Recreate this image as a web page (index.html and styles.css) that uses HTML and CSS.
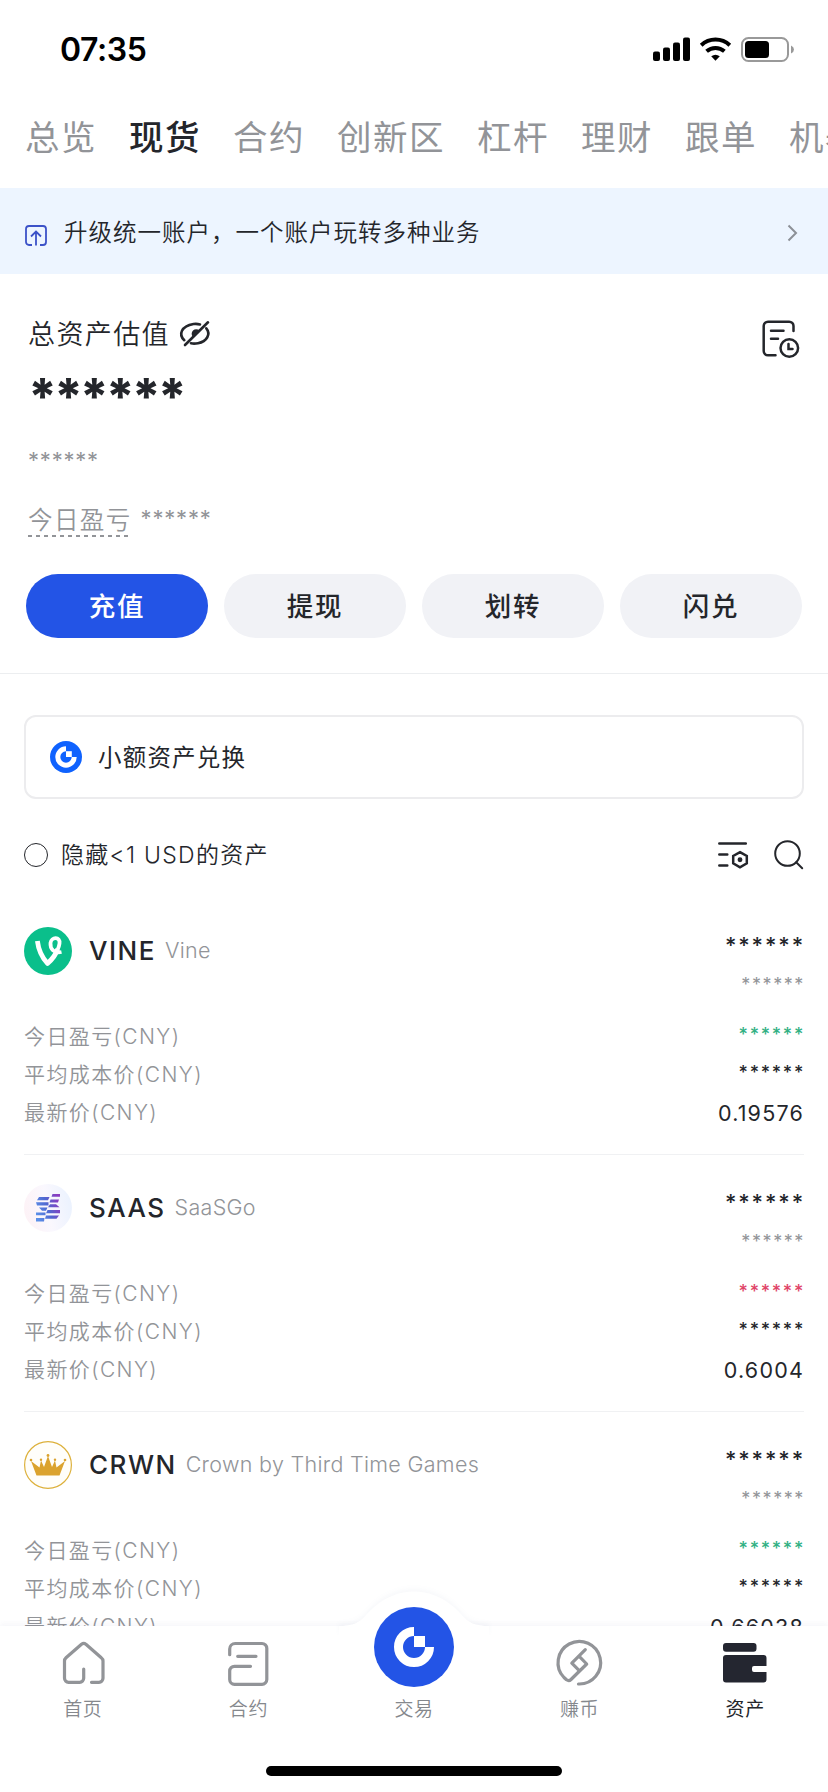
FILE: index.html
```html
<!DOCTYPE html>
<html lang="zh-CN">
<head>
<meta charset="utf-8">
<title>现货资产</title>
<link rel="stylesheet" href="styles.css">
</head>
<body>
<div class="phone">
  <main class="content">
    <header class="status">
      <span class="time">07:35</span>
      <svg class="status-icons" width="142" height="26" viewBox="0 0 142 26">
        <rect x="0" y="14.5" width="7" height="9.5" rx="2"/><rect x="10" y="10.5" width="7" height="13.5" rx="2"/><rect x="20" y="5.5" width="7" height="18.500" rx="2"/><rect x="30" y="0.500" width="7" height="23.500" rx="2"/>
        <g fill="none" stroke="#000" stroke-width="4"><path d="M48.200 8.200a21 21 0 0 1 28.600 0"/><path d="M53.600 14.300a13.500 13.500 0 0 1 17.800 0"/></g>
        <path d="M58.200 19.300q4.300-3.300 8.600 0L62.500 23.800z"/>
        <rect x="89" y="1" width="46" height="23" rx="6.500" fill="none" stroke="#999" stroke-width="2"/>
        <rect x="92" y="4" width="24" height="17" rx="3.500"/>
        <path d="M138 8.500q3 1.300 3 4t-3 4z" fill="#999"/>
      </svg>
    </header>
    <nav class="tabs">
      <span>总览</span><span class="tab-on">现货</span><span>合约</span><span>创新区</span><span>杠杆</span><span>理财</span><span>跟单</span><span>机器人</span>
    </nav>
    <section class="banner">
      <svg width="22" height="22" viewBox="0 0 22 22" class="banner-icon"><path d="M7 20H4a3 3 0 0 1-3-3V4a3 3 0 0 1 3-3h14a3 3 0 0 1 3 3v13a3 3 0 0 1-3 3h-3M11 20.500V7M6 11.500l5-5 5 5"/></svg>
      <span class="banner-text">升级统一账户，一个账户玩转多种业务</span>
      <svg width="11" height="18" viewBox="0 0 11 18" class="chevron"><path d="M1.500 1.500L9 9l-7.500 7.500"/></svg>
    </section>
    <section class="summary">
      <div class="summary-head">
        <span class="summary-title">总资产估值</span>
        <svg class="eye" width="31" height="26" viewBox="0 0 31 26"><path d="M4.300 19.200C-1.800 13.500 1.200 5 13.500 3q3.500-.400 6.500.400M26.300 7.300C31 13 27 20.500 18 22.200q-3.800.700-7 .100M28 1.300L5 24"/><path class="eye-fill" d="M19.500 9.500l-6.500 6.500a4.300 4.300 0 0 1 6.500-6.500z"/></svg>
        <svg class="bill" width="38" height="38" viewBox="0 0 38 38"><path d="M31.500 11V6a4.300 4.300 0 0 0-4.300-4.300H6A4.300 4.300 0 0 0 1.700 6v25A4.300 4.300 0 0 0 6 35.300h7.500M9 10.700h12.500M9 18.700h7M26.500 24v5h4"/><circle cx="27.300" cy="28" r="8.800"/></svg>
      </div>
      <div class="mask-total">******</div>
      <div class="mask-fiat">******</div>
      <div class="pnl"><span class="pnl-label">今日盈亏</span><span class="mask-pnl">******</span></div>
      <div class="actions">
        <button class="btn btn-main">充值</button><button class="btn">提现</button><button class="btn">划转</button><button class="btn">闪兑</button>
      </div>
    </section>
    <section class="dust">
      <svg width="32" height="32" viewBox="-16 -16 32 32"><circle r="16" fill="#0f62fe"/><path d="M0-8.200A8.200 8.200 0 1 0 8.200 0" fill="none" stroke="#fff" stroke-width="5"/><path d="M0-5.800H5.800V0H0z" fill="#fff"/></svg>
      <span class="dust-text">小额资产兑换</span>
    </section>
    <section class="filter">
      <i class="radio"></i>
      <span class="filter-text">隐藏&lt;1 USD的资产</span>
      <svg class="line-icon" width="31" height="28" viewBox="0 0 31 28"><path d="M1.300 2.500h26.500M1.300 13.500h8M1.300 24.500h8M22 11.200l6.800 3.800v7.400L22 26.300l-6.800-3.900V15z"/><circle cx="22" cy="18.700" r="1.200"/></svg>
      <svg class="line-icon search" width="30" height="30" viewBox="0 0 30 30"><circle cx="13.500" cy="13.500" r="12.300"/><path d="M22.200 22.200l6 6"/></svg>
    </section>
    <section class="assets">
      <article class="asset">
        <div class="asset-head">
          <svg width="48" height="48" viewBox="0 0 48 48"><circle cx="24" cy="24" r="24" fill="#0abf8b"/><path d="M13.400 14C14.500 23 18 30.500 23.500 36.500C29 31.500 32 27.500 33.500 22" fill="none" stroke="#fff" stroke-width="4.800" stroke-linejoin="round"/><path d="M37.500 25C30 26.500 26 22 26.500 16C27.300 9.500 36.500 9.500 35.500 16.500C35 20 34.500 21 33.500 23" fill="none" stroke="#fff" stroke-width="3.800"/></svg>
          <b class="symbol">VINE</b><span class="name">Vine</span>
          <div class="amounts"><span class="mask-amount">******</span><span class="mask-value">******</span></div>
        </div>
        <dl class="rows">
          <div class="row"><dt>今日盈亏(CNY)</dt><dd class="mask up">******</dd></div>
          <div class="row"><dt>平均成本价(CNY)</dt><dd class="mask">******</dd></div>
          <div class="row"><dt>最新价(CNY)</dt><dd>0.19576</dd></div>
        </dl>
      </article>
      <article class="asset">
        <div class="asset-head">
          <svg width="48" height="48" viewBox="0 0 48 48">
            <defs><linearGradient id="halo" x1="0" y1=".6" x2="1" y2=".4"><stop offset="0" stop-color="#fdf2f6"/><stop offset=".5" stop-color="#faf8fe"/><stop offset="1" stop-color="#ebf2fe"/></linearGradient>
            <linearGradient id="bars" gradientUnits="userSpaceOnUse" x1="12" y1="28" x2="36" y2="20"><stop offset="0" stop-color="#5b8fe8"/><stop offset=".5" stop-color="#5068d0"/><stop offset="1" stop-color="#8a3cc0"/></linearGradient></defs>
            <circle cx="24" cy="24" r="24" fill="url(#halo)"/>
            <g fill="url(#bars)"><path d="M28.500 10H36v2.700h-8.500zM15 13h10.500l-1.500 3.300H13zM26.500 15.500H35l-1 3h-8.500zM12 18.300h12.500v3.200H13zM26 20.300h6l3.500 3H24zM15 23.500h8.500l-1.500 3.200h-4zM23.500 26H36v3.200H22zM12 28.500h9.500v2.800H12zM22 31.500h13l-2.500 3.200H21zM12 34h8.500l-.500 3.500h-8z"/></g>
          </svg>
          <b class="symbol">SAAS</b><span class="name">SaaSGo</span>
          <div class="amounts"><span class="mask-amount">******</span><span class="mask-value">******</span></div>
        </div>
        <dl class="rows">
          <div class="row"><dt>今日盈亏(CNY)</dt><dd class="mask down">******</dd></div>
          <div class="row"><dt>平均成本价(CNY)</dt><dd class="mask">******</dd></div>
          <div class="row"><dt>最新价(CNY)</dt><dd>0.6004</dd></div>
        </dl>
      </article>
      <article class="asset">
        <div class="asset-head">
          <svg width="48" height="48" viewBox="0 0 48 48"><circle cx="24" cy="24" r="23.400" fill="#fffefa" stroke="#ddb13c" stroke-width="1.200"/><g fill="#dba32f"><path d="M7 20l8.500 6.500 1.500-7 3 6.500 4-11 4 11 3-6.500 1.500 7L41 20l-5.500 14.500h-23z"/><circle cx="7" cy="19" r="1.300"/><circle cx="17" cy="18.700" r="1.200"/><circle cx="24" cy="14.500" r="1.400"/><circle cx="31" cy="18.700" r="1.200"/><circle cx="41" cy="19" r="1.300"/></g></svg>
          <b class="symbol">CRWN</b><span class="name">Crown by Third Time Games</span>
          <div class="amounts"><span class="mask-amount">******</span><span class="mask-value">******</span></div>
        </div>
        <dl class="rows">
          <div class="row"><dt>今日盈亏(CNY)</dt><dd class="mask up">******</dd></div>
          <div class="row"><dt>平均成本价(CNY)</dt><dd class="mask">******</dd></div>
          <div class="row"><dt>最新价(CNY)</dt><dd>0.66038</dd></div>
        </dl>
      </article>
    </section>
  </main>
  <footer class="tabbar">
    <svg class="bump" width="150" height="46" viewBox="0 0 150 46"><path d="M0 36C22 36 24 27 34 18C58-4 92-4 116 18C126 27 128 36 150 36V46H0z"/></svg>
    <nav class="tabbar-items">
      <a class="item"><svg class="nav-icon" width="42" height="46" viewBox="0 0 42 46"><path d="M21.700 28V37.300a4 4 0 0 1-4 4H6.500a4 4 0 0 1-4-4V20q0-2 1.500-3.300L19.500 3.200q2.200-1.600 4.400 0L39.300 16.700Q41 18 41 20V37.300a4 4 0 0 1-4 4H29.500"/></svg><span>首页</span></a>
      <a class="item"><svg class="nav-icon" width="42" height="46" viewBox="1 0 42 46"><path d="M3.700 13.700V8a5.500 5.500 0 0 1 5.500-5.500H36a4.800 4.800 0 0 1 4.800 4.800V38.500a4.800 4.800 0 0 1-4.800 4.800H8.500a4.800 4.800 0 0 1-4.800-4.800V30a4.700 4.700 0 0 1 4.700-4.700H24.500M11.700 15.300H30"/></svg><span>合约</span></a>
      <a class="item trade"><svg width="80" height="80" viewBox="-40 -40 80 80"><circle r="40" fill="#2354e6"/><path d="M0-15.500A15.500 15.500 0 1 0 15.500 0" fill="none" stroke="#fff" stroke-width="9"/><path d="M0-11H11V0H0z" fill="#fff"/></svg><span>交易</span></a>
      <a class="item"><svg class="nav-icon" width="48" height="48" viewBox="0 0 48 48"><path d="M22.500 45A21.300 21.300 0 1 0 8 38.500L10.500 40.800Q13 42.500 15 40.500L30.700 25L23 17.200M29.300 10.700L15.800 24.200L22.500 30.800"/></svg><span>赚币</span></a>
      <a class="item item-on"><svg width="44" height="40" viewBox="0 0 44 40" fill="#242630"><rect width="33.500" height="8.700" rx="3"/><path d="M3 12H40.500a3 3 0 0 1 3 3V23H31a2 2 0 0 0-2 2v2a2 2 0 0 0 2 2H43.500v7.500a3 3 0 0 1-3 3H3a3 3 0 0 1-3-3V15a3 3 0 0 1 3-3z"/></svg><span>资产</span></a>
    </nav>
    <div class="home-indicator"></div>
  </footer>
</div>
</body>
</html>
```
FILE: styles.css
```css
* { box-sizing: border-box; }
body { margin: 0; background: #fff; color: #24262b; font-family: Inter, "Noto Sans CJK SC", sans-serif; }
svg { display: block; flex: none; overflow: visible; }
.phone { width: 828px; height: 1792px; overflow: hidden; display: flex; flex-direction: column; }
.content { height: 1626px; overflow: hidden; flex: none; }

.status { height: 94px; padding: 37px 33px 0 60px; display: flex; justify-content: space-between; align-items: flex-start; }
.time { font-size: 32px; line-height: 26px; font-weight: 600; color: #000; letter-spacing: -.4px; }

.tabs { height: 94px; padding: 18px 0 0 25px; display: flex; gap: 32px; white-space: nowrap; font-size: 34.500px; line-height: 52px; letter-spacing: 1.500px; color: #929498; font-weight: 400; }
.tabs span { flex: none; }
.tabs .tab-on { color: #24262b; font-weight: 500; }

.banner { height: 86px; background: #edf5ff; padding: 0 30px 0 25px; display: flex; align-items: center; }
.banner-icon { margin-top: 10px; fill: none; stroke: #3c52c8; stroke-width: 1.800; }
.banner-text { margin: 0 auto 0 17px; font-size: 23.500px; letter-spacing: 1px; font-weight: 350; color: #24262b; }
.chevron { fill: none; stroke: #8c9097; stroke-width: 2; margin-top: 3px; }

.summary { height: 400px; border-bottom: 1px solid #eceef0; padding: 40px 26px 0; }
.summary-head { height: 40px; display: flex; align-items: center; padding-left: 2px; }
.summary-title { font-size: 27px; letter-spacing: 1.400px; font-weight: 350; margin-top: -3px; }
.eye { margin-left: 10px; fill: none; stroke: #24262b; stroke-width: 2.600; stroke-linecap: round; }
.eye .eye-fill { fill: #24262b; stroke: none; }
.bill { margin: 9px 2px 0 auto; fill: none; stroke: #24262b; stroke-width: 2.500; stroke-linecap: round; }
.mask-total { height: 76px; padding: 17px 0 0 2px; font-size: 50px; line-height: 50px; font-weight: 800; letter-spacing: -3.200px; }
.mask-fiat { height: 68px; padding: 15px 0 0 2px; color: #929498; font-size: 22px; line-height: 30px; letter-spacing: .8px; }
.pnl { height: 76px; padding-left: 2px; display: flex; align-items: flex-start; color: #929498; }
.pnl-label { font-size: 24.500px; letter-spacing: 1.400px; font-weight: 350; line-height: 44px; height: 39px; background: repeating-linear-gradient(90deg, #929498 0 4px, transparent 4px 8px) left bottom / 101px 2px no-repeat; }
.mask-pnl { margin-left: 9px; font-size: 22px; line-height: 30px; padding-top: 5px; letter-spacing: .8px; }
.actions { display: grid; grid-template-columns: repeat(4, 1fr); gap: 16px; }
.btn { height: 64px; border: 0; padding: 0; border-radius: 32px; background: #f1f2f6; color: #24262b; font: 500 26.500px/64px Inter, "Noto Sans CJK SC", sans-serif; letter-spacing: 1.700px; }
.btn-main { background: #2354e6; color: #fff; }

.dust { margin: 41px 24px 0; height: 84px; border: 2px solid #ececee; border-radius: 12px; padding: 0 24px; display: flex; align-items: center; gap: 16px; font-size: 23.500px; letter-spacing: 1.200px; }
.dust-text { margin-top: -2px; }
.filter { height: 99px; padding: 13px 24px 0 24px; display: flex; align-items: center; }
.radio { width: 24px; height: 24px; border: 1.500px solid #24262b; border-radius: 50%; }
.filter-text { margin: -4px auto 0 13px; font-size: 23px; letter-spacing: 1.300px; font-weight: 350; }
.line-icon { fill: none; stroke: #24262b; stroke-width: 2.500; stroke-linecap: round; }
.search { margin-left: 25px; stroke-width: 2; }

.asset { height: 257px; margin: 0 24px; padding-top: 29px; border-bottom: 1px solid #f0f1f3; }
.asset-head { height: 91px; display: flex; align-items: flex-start; }
.symbol { margin-left: 17px; font-size: 26px; line-height: 48px; font-weight: 500; letter-spacing: 1.500px; }
.name { margin-left: 9px; font-size: 21.500px; line-height: 47px; font-weight: 300; letter-spacing: .3px; color: #929498; }
.amounts { margin: -2px -1px 0 auto; display: flex; flex-direction: column; align-items: flex-end; }
.mask-amount { font-size: 22px; line-height: 40px; font-weight: 500; letter-spacing: 1.900px; }
.mask-value { font-size: 18px; line-height: 40px; color: #929498; letter-spacing: 1.600px; }
.rows { margin: 0; }
.row { height: 38px; display: flex; justify-content: space-between; line-height: 38px; font-size: 21px; }
.row dt { color: #929498; font-weight: 350; letter-spacing: 1.400px; }
.row dd { margin: 0; letter-spacing: 1.200px; font-size: 21.500px; }
.row .mask { font-size: 18px; font-weight: 500; line-height: 33px; letter-spacing: 1.700px; margin-right: -1px; }
.row .up { color: #31b083; }
.row .down { color: #e04468; }

.tabbar { height: 166px; background: #fff; position: relative; box-shadow: 0 -3px 5px rgba(60, 80, 150, .045); }
.bump { position: absolute; left: 339px; top: -36px; fill: #fff; filter: drop-shadow(0 -3px 2px rgba(60, 80, 150, .035)); }
.tabbar-items { position: relative; height: 140px; display: grid; grid-template-columns: repeat(5, 1fr); }
.item { height: 98px; display: flex; flex-direction: column; align-items: center; justify-content: flex-end; font-size: 19px; font-weight: 350; color: #85888d; }
.item span { line-height: 28px; letter-spacing: .6px; margin-top: 9px; }
.item-on { color: #24262b; font-weight: 400; }
.item-on span { margin-top: 13px; }
.trade span { margin-top: 9px; }
.nav-icon { fill: none; stroke: #929498; stroke-width: 3.200; stroke-linecap: round; stroke-linejoin: round; }
.home-indicator { width: 296px; height: 10px; border-radius: 5px; background: #000; margin: 0 auto; }
```
